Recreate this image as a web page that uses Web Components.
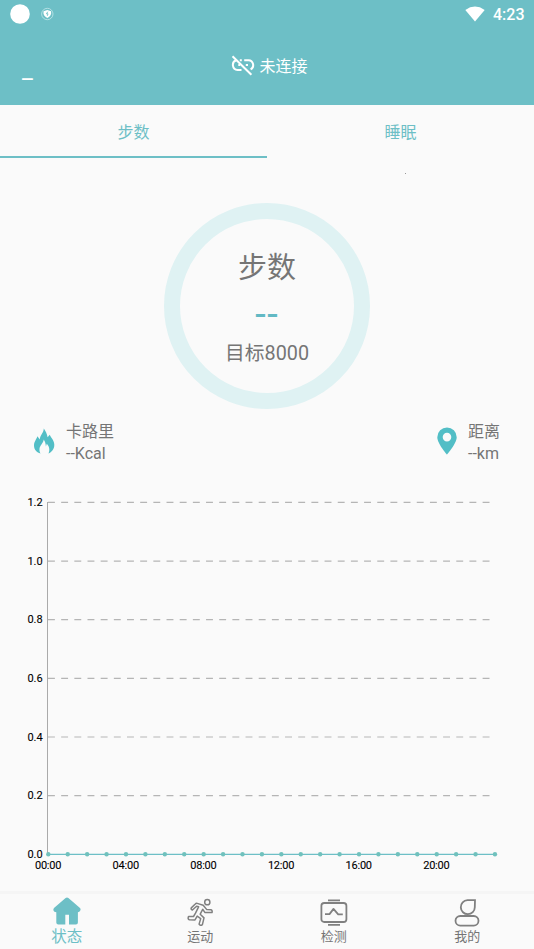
<!DOCTYPE html>
<html lang="zh-CN"><head><meta charset="utf-8"><title>状态</title>
<style>html,body{margin:0;height:949px;overflow:hidden;background:#fafafa}
body{font-family:Roboto,"Noto Sans CJK SC",sans-serif;color:#757575}</style></head><body>
<health-app></health-app>
<script>
const define=(name,html,after)=>customElements.define(name,class extends HTMLElement{
  constructor(){super();const t=document.createElement('template');t.innerHTML=html;
    this.attachShadow({mode:'open'}).append(t.content.cloneNode(true));}
  connectedCallback(){if(after)after(this,this.shadowRoot);}
});

define('status-bar',`<style>
:host{display:flex;height:28px;align-items:center;padding:0 10px 0 10px;color:#fff;box-sizing:border-box}
.sp{flex:1}svg{display:block}.shield{margin-left:11px}
span{font-size:16px;font-weight:500;line-height:28px;margin:1px 0 0 8px;width:31px;white-space:nowrap}
</style>
<svg width="20" height="20"><circle cx="10" cy="10" r="9.8" fill="#fff"/></svg>
<svg class="shield" width="13" height="14" viewBox="0 0 13 14"><circle cx="6.3" cy="7" r="5.7" fill="none" stroke="#b9e3e7" stroke-width=".9"/><path d="M6.3 3 10.1 4.2V6.5Q9.8 9.4 6.3 11 2.8 9.4 2.5 6.5V4.2Z" fill="#fff"/><path d="M6.8 4.7 5.4 6.8H7L6.3 8.8" fill="none" stroke="#6dbfc6" stroke-width=".9"/></svg>
<div class="sp"></div>
<svg width="20" height="16" viewBox="0 0 20 16"><path d="M.3 4Q10-2.8 19.7 4L10 15.6Z" fill="#fff"/></svg>
<span>4:23</span>`);

define('app-header',`<style>
:host{display:block;height:105px;background:#6dbfc6;color:#fff}
.row{display:grid;grid-template-columns:60px 1fr 60px;height:77px}
.dash{font-size:24px;line-height:28px;padding:28px 0 0 22px}
.state{display:flex;justify-content:center;align-items:center;height:28px;margin-top:23px;font-size:16px;line-height:24px;gap:4px;padding-left:5px}
.state span{padding-top:3px}.state svg{margin-top:2px}
svg{display:block}
</style><status-bar></status-bar>
<div class="row"><div class="dash">_</div><div class="state">
<svg width="24" height="22" viewBox="0 0 24 22"><g fill="none" stroke="#fff" stroke-width="2"><path d="M5.2 5.3A5 5 0 0 0 6.6 15H10.5M13.2 5.2H17.5A4.9 4.9 0 0 1 19.6 14.4M14.8 10.1H17M7.3 10.1H9.2M8.8 5.2H10.8"/><path d="M1.5 1.3 20.4 19.8"/></g></svg>
<span>未连接</span></div></div>`);

define('tab-item',`<style>
:host{flex:1;display:block;box-sizing:border-box;height:53px;text-align:center;font-size:16px;line-height:55px;color:#6dbfc6;border-bottom:2px solid transparent}
:host([active]){border-color:#6dbfc6}</style><slot></slot>`);
define('tab-bar',`<style>:host{display:flex;height:53px}</style><slot></slot>`);

define('step-ring',`<style>
:host{display:flex;flex-direction:column;align-items:center;box-sizing:border-box;width:206px;height:206px;border:16.5px solid #dff2f3;border-radius:50%;margin:45px auto 0;white-space:nowrap}
.name{font-size:29px;line-height:42px;margin-top:28px}.value{font-size:34px;line-height:36px;color:#62b9c4;font-weight:500;margin-top:7px;transform:scaleX(1.04)}
.goal{font-size:19.8px;line-height:28px;margin-top:8px}
</style><div class="name"><slot name="name"></slot></div><div class="value"><slot name="value"></slot></div><div class="goal"><slot name="goal"></slot></div>`);

define('metric-item',`<style>
:host{display:flex;align-items:center;gap:11px;font-size:16px;line-height:22px;white-space:nowrap}
.text{padding-top:2px}
</style><slot name="icon"></slot><div class="text"><div><slot name="label"></slot></div><div><slot name="value"></slot></div></div>`);

define('day-chart',`<style>:host{display:block;height:390px}svg{display:block;font-size:11px;fill:#000;stroke-width:.1}text{stroke:#000}</style>
<svg width="534" height="390" viewBox="0 490 534 390"></svg>`,(el,root)=>{
  let s='';
  for(let i=0;i<7;i++){const y=502.4+i*58.65;
    s+=`<text x="42.7" y="${y+3.6}" text-anchor="end">${((6-i)*.2).toFixed(1)}</text>`;
    if(i<6)s+=`<path d="M48 ${y}H491" stroke="#b5b5b5" stroke-width="1.2" stroke-dasharray="6.9 6.27"/>`;}
  s+='<path d="M47.5 502V854" stroke="#aaa" stroke-width="1"/><path d="M48 854.3H495" stroke="#6dbfc6" stroke-width="1.3"/>';
  for(let i=0;i<24;i++)s+=`<circle cx="${48.3+i*19.42}" cy="854.3" r="2.2" fill="#70c1bd"/>`;
  for(let i=0;i<6;i++)s+=`<text x="${48.2+i*77.65}" y="869.2" text-anchor="middle" textLength="26.5">${String(i*4).padStart(2,'0')}:00</text>`;
  root.querySelector('svg').innerHTML=s;
});

define('nav-item',`<style>
:host{flex:1;display:flex;flex-direction:column;align-items:center;font-size:13px;line-height:18px;color:#757575}
:host([active]){font-size:15.5px;color:#6dbfc6}
.icon{height:33px;padding-top:3px;box-sizing:border-box}
:host([active]) .icon{padding-top:2px}
</style><div class="icon"><slot name="icon"></slot></div><div><slot></slot></div>`);
define('bottom-nav',`<style>:host{display:flex;height:58px;border-top:3px solid #f5f5f5;box-sizing:border-box;padding-top:1px}</style><slot></slot>`);

define('health-app',`<style>
:host{display:flex;flex-direction:column;height:949px;width:534px;background:#fafafa;position:relative}
.metrics{display:flex;justify-content:space-between;padding:0 34px 0 33px;margin-top:11px;height:44px}
day-chart{margin-top:26px}bottom-nav{margin-top:auto}
svg{display:block}.speck{position:absolute;left:405px;top:173px;width:1px;height:1px;background:#999}
.pin{margin-bottom:2px}
</style>
<app-header></app-header>
<tab-bar><tab-item active>步数</tab-item><tab-item>睡眠</tab-item></tab-bar>
<i class="speck"></i>
<step-ring><span slot="name">步数</span><span slot="value">--</span><span slot="goal">目标8000</span></step-ring>
<div class="metrics">
<metric-item><svg slot="icon" class="pin" width="22" height="26" viewBox="0 0 22 26"><path d="M10.8.5C12.6 3 14 5.6 14.6 9.2L16.7 6.8C18 9.8 21 12 21.3 16.4 21.5 21 18.5 24 15.5 25.5 17.3 21.5 16 18 13.8 15.8L12.9 18.4C12.7 15.5 12 13.5 10.7 11.5 10.5 15 6.8 17.5 6.5 20.7 6.3 22.8 6.8 24.3 7.5 25.5 4 24.7 1 21.7 1 17.5 1 13.5 3.4 11.7 4.4 8.3L6.8 11.5C7 7.2 10.7 4.7 10.8.5Z" fill="#52bec6"/></svg><span slot="label">卡路里</span><span slot="value">--Kcal</span></metric-item>
<metric-item><svg slot="icon" class="pin" width="20" height="28" viewBox="0 0 20 28"><path fill-rule="evenodd" d="M10 .5A9.7 9.7 0 0 1 19.7 10.2C19.7 16.5 10 27.5 10 27.5S.3 16.5.3 10.2A9.7 9.7 0 0 1 10 .5ZM10 5.8A4.3 4.3 0 1 0 10 14.4 4.3 4.3 0 1 0 10 5.8Z" fill="#52bec6"/></svg><span slot="label">距离</span><span slot="value">--km</span></metric-item>
</div>
<day-chart></day-chart>
<bottom-nav>
<nav-item active><svg slot="icon" width="28" height="28" viewBox="0 0 28 28"><path d="M12.6 1.1Q14 0 15.4 1.1L27 10.9Q28.5 13 26.3 14.7L24.9 15.2V25.5Q24.9 27.4 22.9 27.4H16V17.7H12.3V27.4H5.3Q3.3 27.4 3.3 25.5V15.2L1.4 14.7Q-.5 13 1 10.9Z" fill="#6dbfc6"/></svg>状态</nav-item>
<nav-item><svg slot="icon" width="26" height="29" viewBox="0 0 26 29"><g fill="none" stroke="#808080" stroke-width="1.5" stroke-linejoin="round"><circle cx="20.3" cy="4.2" r="2.6"/><path d="M16.2 7.2 10.2 5.4Q9.1 5.1 8.3 6L4.3 9.9Q3.6 11.3 5.4 12L9.6 8.2 11.6 8.8 8.5 15.2 6.5 18.5H1.5Q.5 21.3 2.4 21.8L8 21.9 10.2 18.1 13.7 20.6 12.1 26.1Q13.2 28.2 15.4 26.6L17 19.9 13.2 16.2 15.7 11.3 18 14.6H25Q25.6 12.2 24 11.8L19.8 11.6Z"/></g></svg>运动</nav-item>
<nav-item><svg slot="icon" width="28" height="29" viewBox="0 0 28 29"><g fill="none" stroke="#808080" stroke-width="1.8"><rect x="1.4" y="5" width="25" height="19" rx="2.8"/><path d="M8 2.3H20M8 26.8H20"/><path d="M5 16.1H9.5L13.5 10.9 18.2 16.3H22.8" stroke-linejoin="round"/></g></svg>检测</nav-item>
<nav-item><svg slot="icon" width="26" height="29" viewBox="0 0 26 29"><g fill="none" stroke="#808080" stroke-width="1.8"><path d="M21 2.2H13.5A7 7 0 1 0 20.8 9.2Z"/><rect x="1.5" y="18" width="23" height="9.6" rx="4.8"/></g></svg>我的</nav-item>
</bottom-nav>`);
</script></body></html>
